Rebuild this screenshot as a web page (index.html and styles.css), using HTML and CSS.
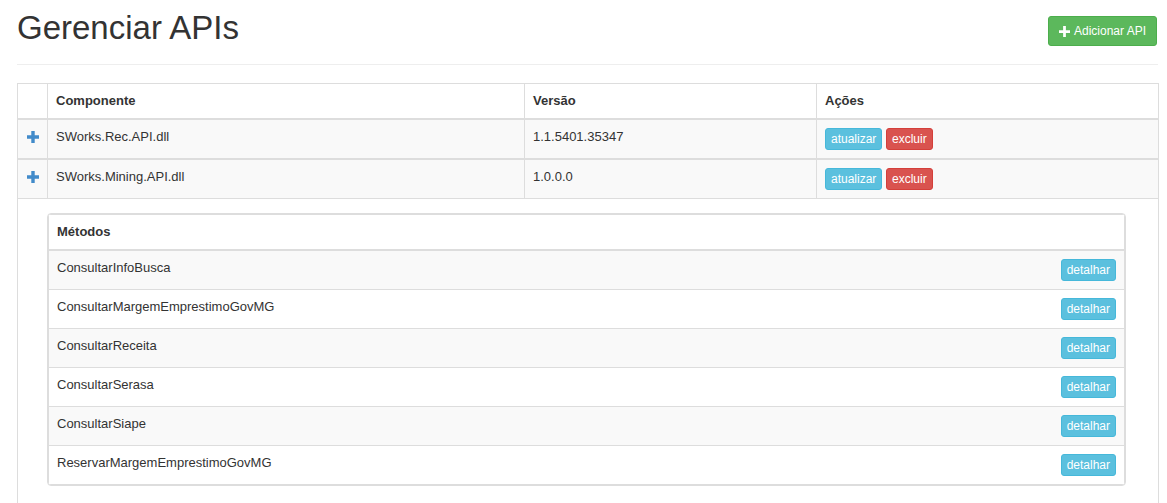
FILE: index.html
```html
<!DOCTYPE html>
<html lang="pt">
<head>
<meta charset="utf-8">
<title>Gerenciar APIs</title>
<link rel="stylesheet" href="styles.css">
</head>
<body>
<div class="container">
  <div class="page-header">
    <h1>Gerenciar APIs</h1>
    <button class="btn btn-success btn-sm"><svg class="ico-plus-w" viewBox="0 0 12 12" width="11" height="11"><path d="M4.5 0h3v4.5H12v3H7.5V12h-3V7.5H0v-3h4.5z" fill="#fff"/></svg>Adicionar API</button>
  </div>

  <table class="apis">
    <colgroup>
      <col class="c-toggle"><col class="c-comp"><col class="c-ver"><col class="c-act">
    </colgroup>
    <thead>
      <tr><th></th><th>Componente</th><th>Versão</th><th>Ações</th></tr>
    </thead>
    <tbody>
      <tr class="api-row">
        <td class="toggle"><svg class="ico-plus" viewBox="0 0 12 12" width="12" height="12"><path d="M4.3 0h3.4v4.3H12v3.4H7.7V12H4.3V7.7H0V4.3h4.3z" fill="#428bca"/></svg></td>
        <td>SWorks.Rec.API.dll</td>
        <td>1.1.5401.35347</td>
        <td><button class="btn btn-info btn-xs">atualizar</button> <button class="btn btn-danger btn-xs">excluir</button></td>
      </tr>
    </tbody>
    <tbody>
      <tr class="api-row">
        <td class="toggle"><svg class="ico-plus" viewBox="0 0 12 12" width="12" height="12"><path d="M4.3 0h3.4v4.3H12v3.4H7.7V12H4.3V7.7H0V4.3h4.3z" fill="#428bca"/></svg></td>
        <td>SWorks.Mining.API.dll</td>
        <td>1.0.0.0</td>
        <td><button class="btn btn-info btn-xs">atualizar</button> <button class="btn btn-danger btn-xs">excluir</button></td>
      </tr>
      <tr class="detail-row">
        <td colspan="4" class="detail">
          <div class="panel">
            <table class="methods">
              <thead><tr><th>Métodos</th></tr></thead>
              <tbody>
                <tr><td><span>ConsultarInfoBusca</span><button class="btn btn-info btn-xs">detalhar</button></td></tr>
                <tr><td><span>ConsultarMargemEmprestimoGovMG</span><button class="btn btn-info btn-xs">detalhar</button></td></tr>
                <tr><td><span>ConsultarReceita</span><button class="btn btn-info btn-xs">detalhar</button></td></tr>
                <tr><td><span>ConsultarSerasa</span><button class="btn btn-info btn-xs">detalhar</button></td></tr>
                <tr><td><span>ConsultarSiape</span><button class="btn btn-info btn-xs">detalhar</button></td></tr>
                <tr><td><span>ReservarMargemEmprestimoGovMG</span><button class="btn btn-info btn-xs">detalhar</button></td></tr>
              </tbody>
            </table>
          </div>
        </td>
      </tr>
    </tbody>
  </table>
</div>
</body>
</html>
```

FILE: styles.css
```css
html, body {
  margin: 0;
  padding: 0;
  background: #fff;
}
body {
  font-family: "Liberation Sans", Arial, sans-serif;
  font-size: 13px;
  line-height: 1.428571;
  color: #333;
}
.container {
  margin-left: 17px;
  width: 1141px;
}
.page-header {
  display: flex;
  justify-content: space-between;
  align-items: flex-start;
  padding-bottom: 18px;
  border-bottom: 1px solid #eee;
}
.page-header h1 {
  margin: 10px 0 0 0;
  font-size: 33px;
  font-weight: normal;
  line-height: 36px;
  color: #333;
}
.btn {
  display: inline-block;
  font-family: inherit;
  color: #fff;
  border: 1px solid transparent;
  cursor: pointer;
  white-space: nowrap;
  vertical-align: top;
}
.btn-sm {
  margin-top: 16px;
  margin-right: 1px;
  height: 30px;
  padding: 0 10px;
  font-size: 12px;
  line-height: 28px;
  border-radius: 3px;
  display: inline-flex;
  align-items: center;
}
.btn-xs {
  padding: 1px 5px;
  font-size: 12px;
  line-height: 18px;
  border-radius: 3px;
}
.btn-success { background: #5cb85c; border-color: #4cae4c; }
.btn-info { background: #5bc0de; border-color: #46b8da; }
.btn-danger { background: #d9534f; border-color: #d43f3a; }
.ico-plus-w {
  margin-right: 4px;
}

table {
  border-collapse: collapse;
  border-spacing: 0;
}
.apis {
  margin-top: 18px;
  width: 1141px;
  table-layout: fixed;
  border: 1px solid #ddd;
}
.c-toggle { width: 30px; }
.c-comp { width: 477px; }
.c-ver { width: 292px; }
.c-act { width: 342px; }
.apis th, .apis td {
  padding: 8px;
  text-align: left;
  vertical-align: top;
  border: 1px solid #ddd;
  line-height: 18px;
}
.apis > thead > tr > th {
  font-weight: bold;
  border-bottom: 2px solid #ddd;
}
.apis > tbody + tbody {
  border-top: 2px solid #ddd;
}
.apis > tbody > tr.api-row > td {
  background: #f9f9f9;
  height: 22px;
}
.apis td.toggle {
  text-align: center;
  padding: 11px 0 0 0;
}
.ico-plus {
  display: block;
  margin: 0 auto;
}
.apis td.detail {
  padding: 14px 32px 20px 29px;
  background: #fff;
}
.panel {
  border: 1px solid #ddd;
  border-radius: 4px;
  background: #fff;
  overflow: hidden;
}
.methods {
  width: 100%;
}
.methods th, .methods td {
  padding: 8px;
  text-align: left;
  vertical-align: top;
  line-height: 18px;
}
.methods th {
  font-weight: bold;
  border-bottom: 2px solid #ddd;
}
.methods td {
  border-top: 1px solid #ddd;
  height: 22px;
}
.methods tbody tr:first-child td {
  border-top: none;
}
.methods tbody tr:nth-child(odd) td {
  background: #f9f9f9;
}
.methods td .btn {
  float: right;
}
```
